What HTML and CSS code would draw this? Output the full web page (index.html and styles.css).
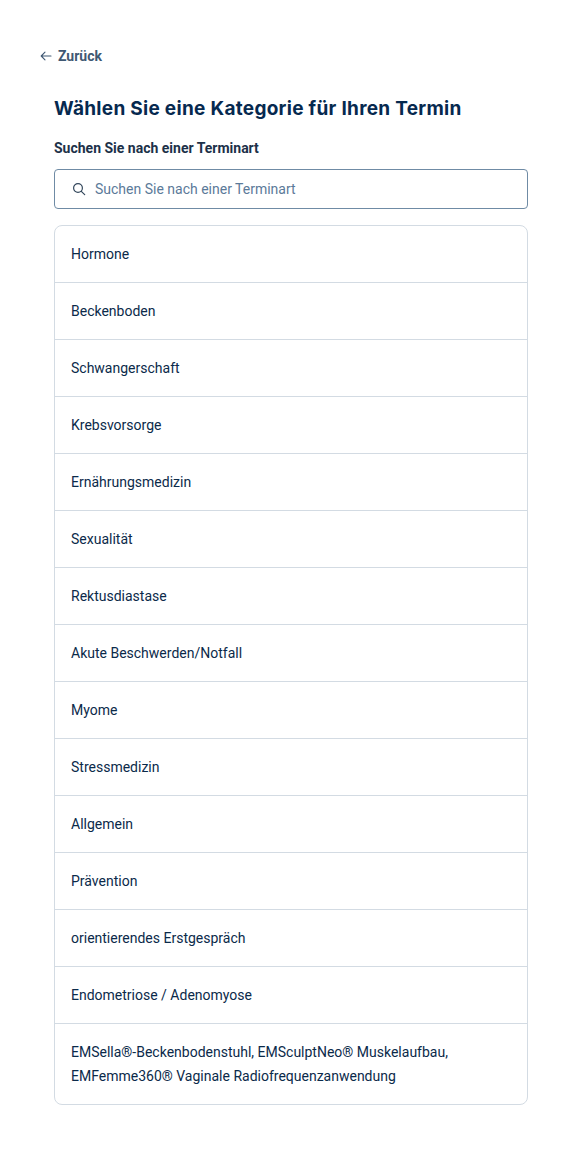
FILE: index.html
```html
<!DOCTYPE html>
<html lang="de">
<head>
  <meta charset="utf-8">
  <title>Kategorie wählen</title>
  <link rel="stylesheet" href="styles.css">
</head>
<body>
  <a class="back" href="#">
    <svg class="back-icon" width="12" height="12" viewBox="0 0 12 12" fill="none" stroke="currentColor" stroke-width="1.1" stroke-linecap="round" stroke-linejoin="round"><path d="M11 6H1.2M5 2.2 1.2 6 5 9.8"/></svg>
    Zurück
  </a>
  <main class="content">
    <h1>Wählen Sie eine Kategorie für Ihren Termin</h1>
    <label class="search-label" for="search">Suchen Sie nach einer Terminart</label>
    <div class="search">
      <svg class="search-icon" width="14" height="14" viewBox="0 0 14 14" fill="none" stroke="currentColor" stroke-width="1.2" stroke-linecap="round"><circle cx="6" cy="6" r="4.4"/><path d="m9.3 9.3 3.4 3.4"/></svg>
      <input id="search" type="text" placeholder="Suchen Sie nach einer Terminart">
    </div>
    <ul class="categories">
      <li>Hormone</li>
      <li>Beckenboden</li>
      <li>Schwangerschaft</li>
      <li>Krebsvorsorge</li>
      <li>Ernährungsmedizin</li>
      <li>Sexualität</li>
      <li>Rektusdiastase</li>
      <li>Akute Beschwerden/Notfall</li>
      <li>Myome</li>
      <li>Stressmedizin</li>
      <li>Allgemein</li>
      <li>Prävention</li>
      <li>orientierendes Erstgespräch</li>
      <li>Endometriose / Adenomyose</li>
      <li>EMSella®-Beckenbodenstuhl, EMSculptNeo® Muskelaufbau, EMFemme360® Vaginale Radiofrequenzanwendung</li>
    </ul>
  </main>
</body>
</html>
```

FILE: styles.css
```css
body {
  margin: 0;
  padding: 47px 53px 63px 40px;
  background-color: #fff;
  font-family: Roboto, "Liberation Sans", sans-serif;
  font-size: 14px;
  color: #0b2a4a;
}
.back {
  display: flex;
  align-items: center;
  gap: 6px;
  height: 18px;
  color: #3f5873;
  font-weight: 700;
  font-size: 14px;
  line-height: 18px;
  text-decoration: none;
}
.content {
  margin: 32px 0 0 14px;
}
h1 {
  margin: 0;
  height: 24px;
  color: #06294f;
  font-family: Inter, sans-serif;
  font-size: 19px;
  font-weight: 700;
  line-height: 24px;
  letter-spacing: 0.29px;
}
.search-label {
  display: block;
  margin-top: 18px;
  color: #1c3149;
  font-size: 14px;
  font-weight: 700;
  line-height: 18px;
}
.search {
  display: flex;
  align-items: center;
  gap: 9px;
  height: 40px;
  margin-top: 12px;
  padding: 0 16px 0 17px;
  border: 1px solid #6f8ba5;
  border-radius: 4px;
  box-sizing: border-box;
  color: #33475c;
}
.search input {
  flex: 1;
  min-width: 0;
  padding: 0;
  border: none;
  outline: none;
  font: inherit;
}
.search input::placeholder {
  color: #5b7a99;
  opacity: 1;
}
.categories {
  margin: 16px 0 0;
  padding: 0;
  list-style: none;
  border: 1px solid #d3dbe3;
  border-radius: 8px;
}
.categories li {
  padding: 16px 16px;
  border-top: 1px solid #d3dbe3;
  line-height: 24px;
}
.categories li:first-child {
  border-top: none;
}
```
